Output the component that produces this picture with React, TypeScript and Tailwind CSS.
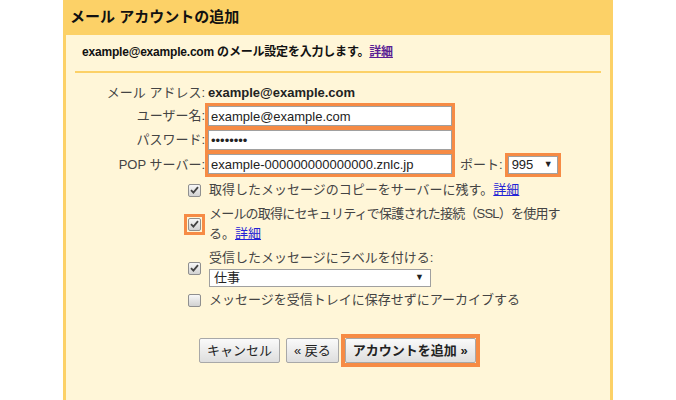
import type { ReactNode } from 'react'

const font = { fontFamily: '"Liberation Sans", Arial, "Noto Sans CJK JP", sans-serif' }

function Check({ checked }: { checked: boolean }) {
  return (
    <span className="flex h-[13px] w-[13px] items-center justify-center rounded-[2px] border border-[#8f8f8f] bg-gradient-to-b from-[#f8f8f8] to-[#d2d2d2]">
      {checked && (
        <svg width="9" height="8" viewBox="0 0 9 8">
          <path d="M1 4.2 L3.4 6.6 L8 1.2" fill="none" stroke="#444" strokeWidth="1.8" />
        </svg>
      )}
    </span>
  )
}

function Link({ children, visited }: { children: ReactNode; visited?: boolean }) {
  return (
    <a className={`underline ${visited ? 'text-[#5b1d94]' : 'text-[#2323d6]'}`} href="#">
      {children}
    </a>
  )
}

function Button({ children, bold }: { children: ReactNode; bold?: boolean }) {
  return (
    <button
      className={`h-[25px] rounded-[2px] border border-[#a8a8a8] bg-gradient-to-b from-[#fafafa] to-[#dedede] px-[7px] text-[13px] text-[#222] ${bold ? 'font-bold' : ''}`}
    >
      {children}
    </button>
  )
}

export default function App() {
  return (
    <div className="h-[400px] w-[676px] overflow-hidden bg-white" style={font}>
      <div className="ml-[63px] flex h-full w-[550px] flex-col bg-[#fcd167]">
        <div className="flex h-[35px] items-center px-[7px] text-[15px] font-bold text-[#111]">
          メール アカウントの追加
        </div>

        <div className="mx-[3px] flex-1 bg-[#fff6d8]">
          <div className="pl-[16px] pt-[10px] text-[12px] font-bold leading-[15px] tracking-[-0.2px] text-[#111]">
            example@example.com のメール設定を入力します。<Link visited>詳細</Link>
          </div>
          <div className="mx-[9px] mt-[11px] h-[2px] bg-[#fcd167]" />

          {/* form */}
          <div className="mt-[10px] grid grid-cols-[139px_1fr] text-[13px] text-[#444]">
            <div className="text-right leading-[20px]">メール アドレス:</div>
            <div className="pl-[3px] font-bold leading-[20px] text-[#222]">example@example.com</div>

            <div className="flex items-center justify-end">ユーザー名:</div>
            <div>
              <div className="w-[250px] border-x-[3px] border-t-[3px] border-b-[2px] border-[#f68b45]">
                <input
                  readOnly
                  value="example@example.com"
                  className="h-[20px] w-full border border-[#a0a0a0] bg-white px-[2px] text-[13px] text-[#222] outline-none"
                />
              </div>
            </div>

            <div className="flex items-center justify-end">パスワード:</div>
            <div>
              <div className="w-[250px] border-x-[3px] border-y-[2px] border-[#f68b45]">
                <input
                  readOnly
                  value="••••••••"
                  className="h-[20px] w-full border border-[#a0a0a0] bg-white px-[2px] text-[13px] text-[#222] outline-none"
                />
              </div>
            </div>

            <div className="flex items-center justify-end">POP サーバー:</div>
            <div className="flex items-center">
              <div className="w-[250px] border-x-[3px] border-t-[2px] border-b-[3px] border-[#f68b45]">
                <input
                  readOnly
                  value="example-000000000000000.znlc.jp"
                  className="h-[20px] w-full border border-[#a0a0a0] bg-white px-[2px] text-[13px] text-[#222] outline-none"
                />
              </div>
              <span className="ml-[5px]">ポート:</span>
              <div className="ml-[2px] border-[3px] border-[#f68b45]">
                <div className="flex h-[18px] w-[50px] items-center justify-between border border-[#a0a0a0] bg-white pl-[3px] pr-[4px] text-[#222]">
                  <span>995</span>
                  <span className="text-[9px]">▼</span>
                </div>
              </div>
            </div>

            {/* checkboxes */}
            <div className="mt-[4px] flex items-center justify-end pr-[4px]">
              <Check checked />
            </div>
            <div className="mt-[4px] pl-[4px] leading-[18px]">
              取得したメッセージのコピーをサーバーに残す。<Link>詳細</Link>
            </div>

            <div className="mt-[5px] flex items-center justify-end">
              <span className="border-[3px] border-[#f68b45] p-[1px]">
                <Check checked />
              </span>
            </div>
            <div className="mt-[5px] pl-[4px] leading-[20px]">
              <div className="whitespace-nowrap tracking-[-0.8px]">メールの取得にセキュリティで保護された接続（SSL）を使用す</div>
              <div>
                る。<Link>詳細</Link>
              </div>
            </div>

            <div className="mt-[5px] flex items-center justify-end pr-[4px]">
              <Check checked />
            </div>
            <div className="mt-[5px] pl-[4px]">
              <div className="leading-[18px]">受信したメッセージにラベルを付ける:</div>
              <div className="mt-[2px] flex h-[18px] w-[222px] items-center justify-between border border-[#a0a0a0] bg-white pl-[4px] pr-[6px] text-[#222]">
                <span>仕事</span>
                <span className="text-[9px]">▼</span>
              </div>
            </div>

            <div className="mt-[4px] flex items-center justify-end pr-[4px]">
              <Check checked={false} />
            </div>
            <div className="mt-[4px] pl-[4px] leading-[18px]">メッセージを受信トレイに保存せずにアーカイブする</div>
          </div>

          {/* buttons */}
          <div className="mt-[25px] flex items-center pl-[133px]">
            <Button>キャンセル</Button>
            <div className="ml-[6px]">
              <Button>« 戻る</Button>
            </div>
            <div className="ml-[2px] border-[4px] border-[#f68b45]">
              <Button bold>アカウントを追加 »</Button>
            </div>
          </div>
        </div>
      </div>
    </div>
  )
}
